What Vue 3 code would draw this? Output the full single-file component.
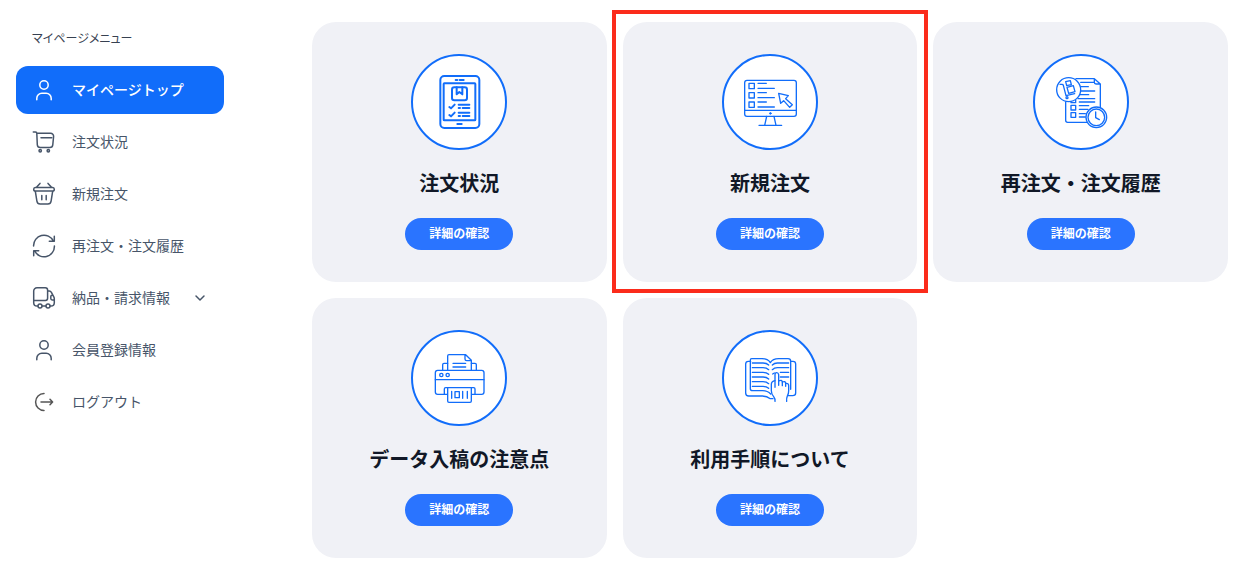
<script setup>
const menu = [
  { label: 'マイページトップ', icon: 'user', active: true },
  { label: '注文状況', icon: 'cart' },
  { label: '新規注文', icon: 'basket' },
  { label: '再注文・注文履歴', icon: 'refresh' },
  { label: '納品・請求情報', icon: 'truck', expandable: true },
  { label: '会員登録情報', icon: 'user' },
  { label: 'ログアウト', icon: 'logout' },
]

const cards = [
  { title: '注文状況', icon: 'tablet' },
  { title: '新規注文', icon: 'monitor', highlighted: true },
  { title: '再注文・注文履歴', icon: 'history' },
  { title: 'データ入稿の注意点', icon: 'printer' },
  { title: '利用手順について', icon: 'book' },
]
</script>

<template>
  <div class="page">
    <aside class="sidebar">
      <h2 id="menu-title" class="menu-title">マイページメニュー</h2>
      <nav class="menu" aria-labelledby="menu-title">
        <component
          :is="item.expandable ? 'button' : 'a'"
          v-for="item in menu"
          :key="item.label"
          class="menu-item"
          :class="{ active: item.active }"
          :href="item.expandable ? undefined : '#'"
          :type="item.expandable ? 'button' : undefined"
          :aria-expanded="item.expandable ? 'false' : undefined"
        >
          <svg class="menu-icon" :class="item.icon" viewBox="0 0 24 24" aria-hidden="true">
            <g v-if="item.icon === 'user'">
              <circle cx="12" cy="7" r="4.2" />
              <path d="M4.8 21.7v-1.5a5 5 0 0 1 5-5h4.4a5 5 0 0 1 5 5v1.5" />
            </g>
            <g v-else-if="item.icon === 'cart'">
              <path d="M1.3 1.9h2.1a1.4 1.4 0 0 1 1.4 1.4l.5 11.4a3 3 0 0 0 3 2.8h9.5a3 3 0 0 0 3-2.8l.8-8.2a3 3 0 0 0-3-3.200H4.800M9 7.700h10.700" />
              <circle cx="8.2" cy="20.8" r="1.2" />
              <circle cx="16.3" cy="20.8" r="1.2" />
            </g>
            <g v-else-if="item.icon === 'basket'">
              <path d="M8 1.4 4.7 5M16 1.4 19.3 5M3.3 5.4h17.4c1 0 1.6.7 1.6 1.8s-.6 1.9-1.6 1.9H3.3c-1 0-1.6-.8-1.6-1.9s.6-1.8 1.6-1.8ZM3.3 9.2l1.6 9.9c.3 1.7 1.2 2.9 3.2 2.9h7.8c2 0 2.9-1.2 3.2-2.9l1.6-9.9M9.8 13.4v4.4M14.2 13.4v4.4" />
            </g>
            <g v-else-if="item.icon === 'refresh'">
              <path d="M1.6 12A10.4 10.4 0 0 1 21.3 7M22.4 12A10.4 10.4 0 0 1 2.7 17M22.3 2.2v5h-5M1.7 21.8v-5h5" />
            </g>
            <g v-else-if="item.icon === 'truck'">
              <path d="M5.8 20H5a3.3 3.3 0 0 1-3.3-3.3V5A3.3 3.3 0 0 1 5 1.7h8.3A2.3 2.3 0 0 1 15.6 4v8.2a2.2 2.2 0 0 1-2.2 2.2H1.7M10.2 20h3.6M15.6 5h1.6c1 0 1.7.5 2.2 1.4l2.4 4.4c.4.7.5 1.3.5 2v3.9A3.3 3.3 0 0 1 19 20h-.8M20.9 9.2h-.8c-.8 0-1.3.5-1.3 1.3v2.1c0 .8.5 1.3 1.3 1.3h2.2" />
              <circle cx="8" cy="20" r="2" />
              <circle cx="16" cy="20" r="2" />
            </g>
            <g v-else>
              <path d="M12 20.4a8.4 8.4 0 0 1 0-16.8M9 12h11.5M18 9.3l2.6 2.7-2.6 2.7" />
            </g>
          </svg>
          <span class="menu-label">{{ item.label }}</span>
          <svg v-if="item.expandable" class="chevron" viewBox="0 0 16 16" aria-hidden="true">
            <path d="m4 6 4 4 4-4" />
          </svg>
        </component>
      </nav>
    </aside>

    <main class="content">
      <section
        v-for="card in cards"
        :key="card.title"
        class="card"
        :class="{ highlighted: card.highlighted }"
      >
        <svg class="card-icon" viewBox="0 0 288 288" aria-hidden="true">
          <circle class="ring" cx="144" cy="144" r="141" />
          <g transform="translate(-21 -18)">
            <g v-if="card.icon === 'tablet'" class="bold">
              <rect x="109" y="84" width="117" height="156" rx="12" />
              <rect x="119" y="106" width="95" height="111" rx="2" />
              <path d="M155 96h5M167 96h12M160 228h13" />
              <rect x="144" y="118" width="45" height="39" rx="7" />
              <path d="M158 118v21l8-7 9 7v-21" />
              <path d="m136 177 5 4 11-11M164 170h32M164 180h4M176 180h20M136 201l5 4 11-11M164 194h32M164 204h4M176 204h20" />
            </g>
            <g v-else-if="card.icon === 'monitor'">
              <rect x="89" y="97" width="155" height="108" rx="7" />
              <path d="M89 187h155M164 196h5M166 194v4M155 205l-6 27M177 205l6 27M132 232h68" />
              <path d="M102 106h16v16h-16zM102 134h16v16h-16zM102 162h16v16h-16z" />
              <path d="M129 106h25M129 121h49M129 134h25M129 149h49M129 162h25M129 177h49" />
              <path d="m191 136 29 7-8 9 20 18-8 8-18-20-9 8z" />
            </g>
            <g v-else-if="card.icon === 'history'">
              <path d="M150 92h55l18 16v72M119 158v59q0 6 6 6h58M205 92v11q0 5 5 5h13" />
              <path d="M164 103h39M165 116h22M165 129h41M162 140h26M156 152h50M160 162h46M160 173h28M160 184h26M160 197h18M160 207h18" />
              <path d="M135 172h14v14h-14zM135 194h14v14h-14zM135 160v4h14v-9" />
              <circle class="paper" cx="128" cy="125" r="36" />
              <path d="M102 109h6q3 0 4 3l8 31M120 143l26-6M119 101l14-3 3 12-14 3zM123 118l19-5 5 18-19 5z" />
              <circle cx="123" cy="149" r="3" />
              <circle class="paper" cx="211" cy="208" r="31" />
              <circle cx="211" cy="208" r="25" />
              <path d="M209 192v17l11 6" />
            </g>
            <g v-else-if="card.icon === 'printer'">
              <path d="M131 138V96q0-4 4-4h50l17 17v29M183 92v13q0 5 5 5h14M147 118h38M147 129h38" />
              <path d="M116 138v-16q0-4 4-4h11M202 118h11q4 0 4 4v16" />
              <rect x="94" y="139" width="146" height="72" rx="7" />
              <path d="M94 167h146M121 211v-16q0-4 4-4h84q4 0 4 4v16" />
              <circle cx="112" cy="153" r="5" />
              <circle cx="131" cy="153" r="5" />
              <path class="paper" d="M131 191h71v40q0 4-4 4h-63q-4 0-4-4z" />
              <path d="M143 202v21M176 202v21M190 202v21M153 203h13v18h-13z" />
            </g>
            <g v-else>
              <path d="M107 112h-7q-8 0-8 8v87q0 9 9 9h41q14 0 24 8h8M227 112h7q8 0 8 8v87q0 8-9 8h-13" />
              <path d="M166 116q-7-12-25-12h-31q-4 0-4 4v86q0 6 7 6h30q15 0 24 10M166 116q7-12 25-12h28q8 0 8 8v84" />
              <path d="M112 117h32q11 0 17 6M112 131h32q11 0 17 6M112 145h32q11 0 17 6M112 159h32q11 0 17 6M112 173h32q11 0 17 6M112 187h32q11 0 17 6M172 123q6-6 15-6h34M172 137q6-6 15-6h34M173 150l5-3M196 145h25M196 159h25" />
              <path class="paper" d="M180 232q1-8-4-14-7-8-7-18v-19q0-9 11-11v-18q0-6 5-6t6 6v19q10-5 11 3 9-4 10 4 9-1 9 7v15q0 9-4 16-3 7-2 16" />
              <path d="M180 170v20M191 170v14M202 173v12M212 177v10" />
            </g>
          </g>
        </svg>
        <h3 class="card-title">{{ card.title }}</h3>
        <a class="card-button" href="#">詳細の確認</a>
      </section>
    </main>
  </div>
</template>

<style>
body {
  margin: 0;
  background: #fff;
}
</style>

<style scoped>
.page {
  display: flex;
  align-items: flex-start;
  font-family: "Noto Sans CJK JP", sans-serif;
  color: #111827;
}

.sidebar {
  box-sizing: border-box;
  flex: 0 0 240px;
  padding: 28px 16px 0;
}

.menu-title {
  margin: 0 16px 18px;
  font-size: 12px;
  font-weight: 400;
  line-height: 20px;
  font-feature-settings: "palt";
  color: #374151;
}

.menu {
  display: flex;
  flex-direction: column;
  gap: 4px;
}

.menu-item {
  display: flex;
  align-items: center;
  gap: 16px;
  padding: 12px 16px;
  border: 0;
  border-radius: 12px;
  background: none;
  font: inherit;
  font-size: 14px;
  line-height: 22px;
  text-align: left;
  text-decoration: none;
  color: #475569;
  cursor: pointer;
}

.menu-item.active {
  background: #116dfa;
  font-weight: 500;
  color: #fff;
}

.menu-label {
  flex: 1;
  padding-bottom: 2px;
}

.menu-icon,
.chevron {
  display: block;
  width: 24px;
  height: 24px;
  fill: none;
  stroke: currentColor;
  stroke-width: 1.5;
  stroke-linecap: round;
  stroke-linejoin: round;
}

.menu-icon.logout {
  color: #555;
}

.chevron {
  width: 16px;
  height: 16px;
}

.content {
  flex: 1;
  display: grid;
  grid-template-columns: repeat(3, minmax(0, 1fr));
  gap: 16px;
  padding: 22px 26px 16px 72px;
}

.card {
  position: relative;
  display: flex;
  flex-direction: column;
  align-items: center;
  padding: 32px 16px;
  border-radius: 24px;
  background: #f0f1f6;
}

.card.highlighted::after {
  content: "";
  position: absolute;
  inset: -12px -11px -11px;
  border: 4px solid #fb2b1b;
  pointer-events: none;
}

.card-icon {
  display: block;
  width: 96px;
  height: 96px;
  fill: none;
  stroke: #116dfa;
  stroke-width: 4;
  stroke-linecap: round;
  stroke-linejoin: round;
}

.card-icon .ring {
  fill: #fff;
  stroke-width: 6;
}

.card-icon .bold {
  stroke-width: 6;
}

.card-icon .paper {
  fill: #fff;
}

.card-title {
  margin: 20px 0;
  padding-bottom: 2px;
  font-size: 20px;
  font-weight: 700;
  line-height: 26px;
}

.card-button {
  padding: 0 24px 2px;
  border-radius: 16px;
  background: #2a74ff;
  font-size: 12px;
  font-weight: 700;
  line-height: 30px;
  text-decoration: none;
  color: #fff;
}
</style>
